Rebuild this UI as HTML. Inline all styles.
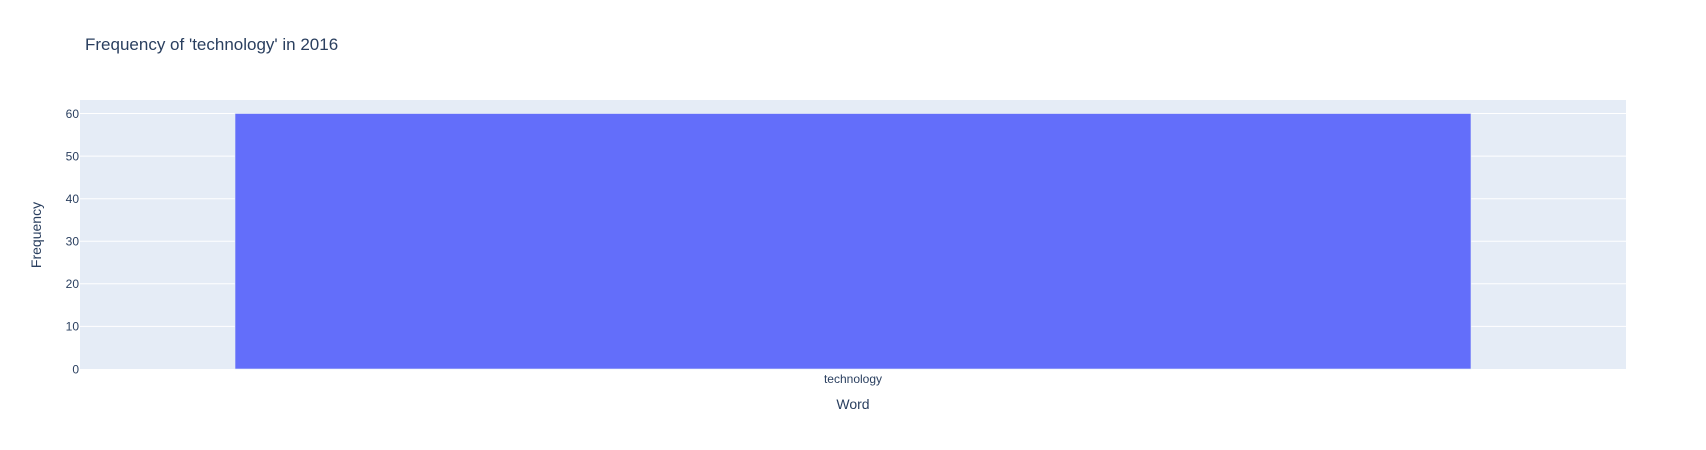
<!DOCTYPE html>
<html><head><meta charset="utf-8"><style>
html,body{margin:0;padding:0;background:#fff;width:1706px;height:450px;overflow:hidden}
</style></head><body>
<svg width="1706" height="450" xmlns="http://www.w3.org/2000/svg" font-family="'Liberation Sans', Arial, sans-serif">
<rect x="0" y="0" width="1706" height="450" fill="#fff"/>
<rect x="80" y="100" width="1546" height="269" fill="#e5ecf6"/>
<g stroke="#fff" stroke-width="1">
<line x1="80" x2="1626" y1="113.5" y2="113.5"/>
<line x1="80" x2="1626" y1="156.1" y2="156.1"/>
<line x1="80" x2="1626" y1="198.7" y2="198.7"/>
<line x1="80" x2="1626" y1="241.2" y2="241.2"/>
<line x1="80" x2="1626" y1="283.8" y2="283.8"/>
<line x1="80" x2="1626" y1="326.4" y2="326.4"/>
</g>
<rect x="235" y="113.5" width="1236" height="255.5" fill="#636efa" stroke="#e5ecf6" stroke-width="0.6"/>
<g fill="#2a3f5f" font-size="12" text-anchor="end">
<text x="79" y="118">60</text>
<text x="79" y="160.5">50</text>
<text x="79" y="203">40</text>
<text x="79" y="245.5">30</text>
<text x="79" y="288">20</text>
<text x="79" y="330.5">10</text>
<text x="79" y="373.5">0</text>
</g>
<text x="853" y="383" fill="#2a3f5f" font-size="12" text-anchor="middle">technology</text>
<text x="853" y="409" fill="#2a3f5f" font-size="14" text-anchor="middle">Word</text>
<text transform="translate(41,235) rotate(-90)" fill="#2a3f5f" font-size="14" text-anchor="middle">Frequency</text>
<text x="85" y="50" fill="#2a3f5f" font-size="17">Frequency of 'technology' in 2016</text>
</svg>
</body></html>
